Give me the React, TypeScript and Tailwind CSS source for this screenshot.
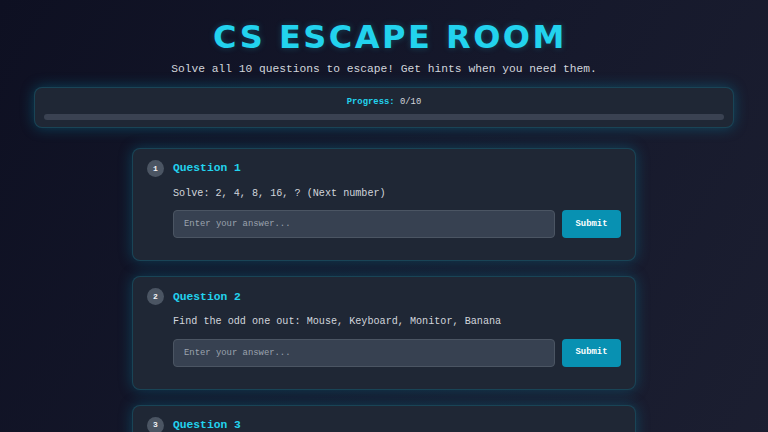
import { useState } from 'react';

const questions = [
  { id: 1, text: 'Solve: 2, 4, 8, 16, ? (Next number)' },
  { id: 2, text: 'Find the odd one out: Mouse, Keyboard, Monitor, Banana' },
  { id: 3, text: 'What does CPU stand for?' },
];

const mono = { fontFamily: '"Liberation Mono", "DejaVu Sans Mono", monospace' };

function QuestionCard({ id, text }: { id: number; text: string }) {
  const [answer, setAnswer] = useState('');

  return (
    <div className="rounded-lg border border-cyan-500/20 bg-[#1f2735] px-[14px] pt-[11px] pb-[22px] shadow-[0_0_14px_rgba(8,145,178,0.35)]">
      <div className="flex items-center gap-[9px]">
        <div className="flex h-[17px] w-[17px] items-center justify-center rounded-full bg-[#4b5563] text-[8px] font-bold text-gray-100">
          {id}
        </div>
        <h2 className="text-[11.3px] font-bold text-[#22d3ee]">Question {id}</h2>
      </div>
      <div className="pl-[26px]">
        <p className="mt-[9px] text-[10.15px] text-gray-300">{text}</p>
        <div className="mt-[9px] flex gap-[7px]">
          <input
            value={answer}
            onChange={(e) => setAnswer(e.target.value)}
            placeholder="Enter your answer..."
            className="h-[28px] flex-1 rounded-[4px] border border-[#4b5563] bg-[#374151] px-[10px] text-[8.9px] text-gray-100 placeholder:text-[#9ca3af] outline-none"
            style={mono}
          />
          <button
            className="h-[28px] w-[59px] rounded-[4px] bg-[#0891b2] text-[8.9px] font-bold text-white"
            style={mono}
          >
            Submit
          </button>
        </div>
      </div>
    </div>
  );
}

export default function App() {
  return (
    <div
      className="min-h-screen overflow-hidden bg-[linear-gradient(120deg,#0e1022_0%,#15182b_50%,#1c1f31_100%)] px-[34px] pt-[17px]"
      style={mono}
    >
      <h1
        className="pl-[12px] text-center text-[32px] font-bold leading-[40px] tracking-[2.5px] text-[#22d3ee] [text-shadow:0_0_6px_rgba(34,211,238,0.25)]"
        style={{ fontFamily: '"DejaVu Sans", sans-serif' }}
      >
        CS ESCAPE ROOM
      </h1>
      <p className="mt-[4px] text-center text-[11.25px] text-gray-300">
        Solve all 10 questions to escape! Get hints when you need them.
      </p>

      <div className="mt-[9px] rounded-lg border border-cyan-500/20 bg-[#1f2735] px-[9px] pt-[8px] pb-[7px] shadow-[0_0_14px_rgba(8,145,178,0.4)]">
        <div className="text-center text-[8.9px]">
          <span className="font-bold text-[#22d3ee]">Progress:</span>{' '}
          <span className="text-gray-300">0/10</span>
        </div>
        <div className="mt-[5px] h-[6px] rounded-full bg-[#3a4252]">
          <div className="h-full w-0 rounded-full bg-[#22d3ee]" />
        </div>
      </div>

      <div className="mx-auto mt-[20px] flex w-[504px] flex-col gap-[15px]">
        {questions.map((q) => (
          <QuestionCard key={q.id} id={q.id} text={q.text} />
        ))}
      </div>
    </div>
  );
}
